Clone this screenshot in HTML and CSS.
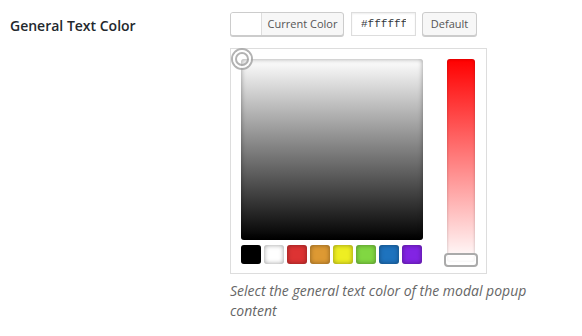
FILE: index.html
```html
<!DOCTYPE html>
<html lang="en">

<head>
  <meta charset="UTF-8">
  <title>General Text Color</title>
  <link rel="stylesheet" href="styles.css">
</head>

<body>
  <div class="row">
    <div class="label">General Text Color</div>

    <div class="field">
      <div class="picker-bar">
        <button class="color-result">
          <span class="swatch"></span>
          <span class="result-text">Current Color</span>
        </button>
        <input class="hex" value="#ffffff" />
        <button class="default-btn">Default</button>
      </div>

      <div class="iris">
        <div class="iris-left">
          <div class="square">
            <span class="square-handle"></span>
          </div>
          <div class="palette">
            <span class="pal black"></span>
            <span class="pal white"></span>
            <span class="pal red"></span>
            <span class="pal orange"></span>
            <span class="pal yellow"></span>
            <span class="pal green"></span>
            <span class="pal blue"></span>
            <span class="pal purple"></span>
          </div>
        </div>
        <div class="slider">
          <span class="slider-handle"></span>
        </div>
      </div>

      <p class="desc">Select the general text color of the modal popup content</p>
    </div>
  </div>
</body>

</html>
```

FILE: styles.css
```css
body {
  margin: 0;
  font-family: "Open Sans", "Liberation Sans", sans-serif;
  background: #fff;
  color: #23282d;
}

.row {
  display: flex;
  padding: 12px 0 0 10px;
}

.label {
  width: 220px;
  padding-top: 5px;
  font-size: 14px;
  font-weight: 600;
  line-height: 18px;
}

.field {
  width: 300px;
}

/* top bar: current color, hex, default */
.picker-bar {
  display: flex;
  align-items: flex-start;
  height: 24px;
}

.color-result {
  display: flex;
  width: 114px;
  height: 24px;
  padding: 0;
  margin: 0 7px 0 0;
  border: 1px solid #ccc;
  border-radius: 3px;
  background: #f7f7f7;
  box-shadow: 0 1px 0 #ccc;
  box-sizing: border-box;
  font-family: inherit;
  overflow: hidden;
}

.swatch {
  flex: none;
  width: 30px;
  height: 22px;
  background: #fff;
  border-right: 1px solid #ddd;
}

.result-text {
  flex: 1;
  line-height: 22px;
  font-size: 11px;
  text-align: center;
  color: #555;
}

.hex {
  width: 65px;
  height: 24px;
  margin: 0 6px 0 0;
  padding: 0 9px;
  border: 1px solid #ddd;
  box-shadow: inset 0 1px 2px rgba(0, 0, 0, 0.07);
  box-sizing: border-box;
  font-family: "Liberation Mono", monospace;
  font-size: 11px;
  color: #32373c;
  outline: none;
}

.default-btn {
  width: 55px;
  height: 24px;
  margin: 0;
  padding: 0;
  border: 1px solid #ccc;
  border-radius: 3px;
  background: #f7f7f7;
  box-shadow: 0 1px 0 #ccc;
  box-sizing: border-box;
  font-family: inherit;
  font-size: 11px;
  line-height: 22px;
  color: #555;
}

/* iris picker */
.iris {
  display: flex;
  gap: 24px;
  width: 257px;
  margin-top: 12px;
  padding: 10px 11px 9px 10px;
  border: 1px solid #ddd;
  box-sizing: border-box;
  background: #fff;
}

.iris-left {
  width: 182px;
}

.square {
  position: relative;
  height: 181px;
  border-radius: 3px;
  background: linear-gradient(to bottom, #fff, #000);
  box-shadow: inset 0 0 5px rgba(0, 0, 0, 0.4);
}

.square-handle {
  position: absolute;
  left: -10px;
  top: -11px;
  width: 22px;
  height: 22px;
  border: 2px solid rgba(160, 160, 160, 0.8);
  border-radius: 50%;
  box-sizing: border-box;
  background: transparent;
}

.square-handle::after {
  content: "";
  position: absolute;
  left: 2px;
  top: 2px;
  right: 2px;
  bottom: 2px;
  border: 2px solid rgba(160, 160, 160, 0.8);
  border-radius: 50%;
  box-shadow: 0 0 0 2px rgba(255, 255, 255, 0.9);
}

.palette {
  display: flex;
  gap: 3px;
  margin-top: 5px;
}

.pal {
  width: 20px;
  height: 19px;
  border-radius: 3px;
  box-shadow: inset 0 0 5px rgba(0, 0, 0, 0.4);
}

.black { background: #000; }
.white { background: #fff; }
.red { background: #dd3333; }
.orange { background: #dd9933; }
.yellow { background: #eeee22; }
.green { background: #81d742; }
.blue { background: #1e73be; }
.purple { background: #8224e3; }

.slider {
  position: relative;
  width: 28px;
  height: 203px;
  border-radius: 3px;
  background: linear-gradient(to bottom, #ff0000, #ffffff);
  box-shadow: inset 0 0 3px rgba(0, 0, 0, 0.25);
}

.slider-handle {
  position: absolute;
  left: -3px;
  top: 194px;
  width: 34px;
  height: 14px;
  border: 2px solid #aaa;
  border-radius: 4px;
  box-sizing: border-box;
  background: rgba(255, 255, 255, 0.7);
  box-shadow: inset 0 0 0 1px #fff;
}

.desc {
  margin: 7px 0 0;
  font-size: 14px;
  font-style: italic;
  line-height: 20px;
  color: #666;
}
```
